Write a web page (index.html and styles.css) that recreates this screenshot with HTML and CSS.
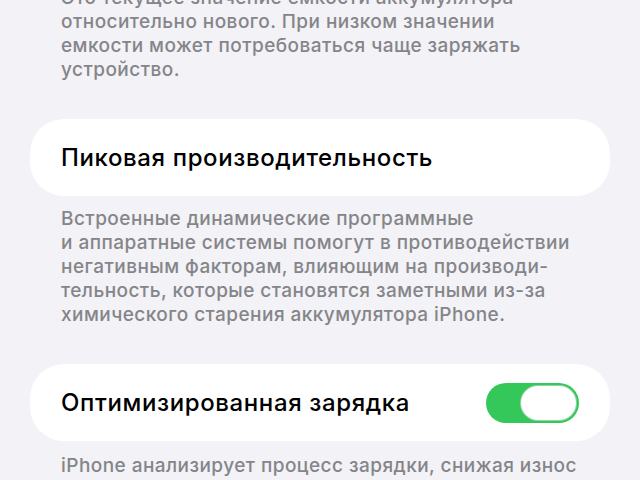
FILE: index.html
```html
<!DOCTYPE html>
<html lang="ru">
<head>
<meta charset="utf-8">
<link rel="stylesheet" href="styles.css">
</head>
<body>
<main class="screen">
  <p class="note">Это текущее значение емкости аккумулятора<br>относительно нового. При низком значении<br>емкости может потребоваться чаще заряжать<br>устройство.</p>
  <section class="card">
    <span class="label">Пиковая производительность</span>
  </section>
  <p class="note note-after">Встроенные динамические программные<br>и аппаратные системы помогут в противодействии<br>негативным факторам, влияющим на производи-<br>тельность, которые становятся заметными из-за<br>химического старения аккумулятора iPhone.</p>
  <section class="card">
    <span class="label">Оптимизированная зарядка</span>
    <span class="toggle" role="switch" aria-checked="true"><span class="knob"></span></span>
  </section>
  <p class="note note-after note-last">iPhone анализирует процесс зарядки, снижая износ</p>
</main>
</body>
</html>
```

FILE: styles.css
```css
* { box-sizing: border-box; }
html, body {
  margin: 0;
  padding: 0;
  background: #f2f2f7;
  overflow: hidden;
}
body {
  font-family: Inter, "Noto Sans", sans-serif;
  -webkit-font-smoothing: antialiased;
}
.screen {
  display: flex;
  flex-direction: column;
  padding: 0 30px;
  margin-top: -14px;
}
.note {
  margin: 0;
  padding: 0 0 0 31px;
  font-size: 19px;
  font-weight: 500;
  letter-spacing: 0.45px;
  line-height: 24px;
  color: #858589;
  white-space: nowrap;
}
.note-after {
  margin-top: 11px;
}
.note-last {
  margin-top: 13px;
}
.card {
  margin-top: 37px;
  height: 77px;
  background: #ffffff;
  border-radius: 34px;
  display: flex;
  align-items: center;
  justify-content: space-between;
  padding: 0 31px;
}
.label {
  font-size: 24px;
  font-weight: 500;
  color: #000;
  letter-spacing: 0.62px;
}
.toggle {
  width: 93px;
  height: 40px;
  border-radius: 20px;
  background: #34c759;
  display: flex;
  align-items: center;
  justify-content: flex-end;
  padding: 2px;
}
.knob {
  width: 57px;
  height: 36px;
  border-radius: 18px;
  background: #fff;
  border: 1px solid rgba(40, 170, 80, 0.5);
}
```
